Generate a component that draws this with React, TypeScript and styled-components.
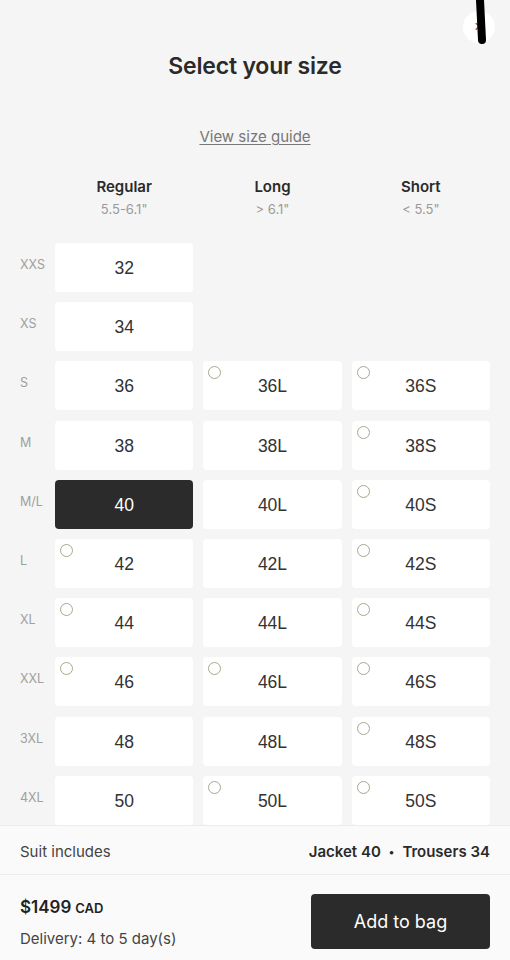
import styled, { createGlobalStyle } from "styled-components";

const GlobalStyle = createGlobalStyle`
    * { box-sizing: border-box; }
    body {
        margin: 0;
        background: #f5f5f5;
        font-family: Inter, "Liberation Sans", Arial, sans-serif;
        color: #2a2a2a;
    }
`;

const Page = styled.div`
    position: relative;
    height: 960px;
    display: flex;
    flex-direction: column;
    overflow: hidden;
    background: #f5f5f5;
`;

const ScrollArea = styled.div`
    flex: 1;
    overflow: hidden;
    padding-top: 50px;
`;

const Title = styled.h1`
    margin: 0;
    text-align: center;
    font-size: 23px;
    line-height: 32px;
    font-weight: 600;
    letter-spacing: -0.2px;
    color: #2a2a2a;
`;

const GuideLink = styled.a`
    display: block;
    width: fit-content;
    margin: 45px auto 0;
    font-size: 15px;
    line-height: 20px;
    color: #777;
    text-decoration: underline;
    text-underline-offset: 2px;
    cursor: pointer;
`;

const Grid = styled.div`
    display: grid;
    grid-template-columns: 25px repeat(3, 1fr);
    column-gap: 10px;
    row-gap: 10.2px;
    padding: 0 20px;
`;

const HeaderGrid = styled(Grid)`
    margin-top: 30px;
    margin-bottom: 25px;
`;

const ColHead = styled.div`
    display: flex;
    flex-direction: column;
    align-items: center;
`;

const ColName = styled.span`
    font-size: 15px;
    line-height: 20px;
    font-weight: 600;
    color: #2a2a2a;
`;

const ColRange = styled.span`
    margin-top: 3px;
    font-size: 13px;
    line-height: 18px;
    color: #9a9a9a;
`;

const RowLabel = styled.div`
    display: flex;
    align-items: center;
    padding-bottom: 6px;
    font-size: 12.5px;
    color: #a0a0a0;
    white-space: nowrap;
`;

const SizeCard = styled.button<{ $selected?: boolean }>`
    position: relative;
    height: 49px;
    border: none;
    border-radius: 4px;
    background: ${(p) => (p.$selected ? "#2b2b2b" : "#fff")};
    color: ${(p) => (p.$selected ? "#fff" : "#333")};
    font-family: "Liberation Sans", Arial, sans-serif;
    font-size: 17.5px;
    cursor: pointer;
    padding: 2px 0 0;
`;

const Notify = styled.span`
    position: absolute;
    top: 5px;
    left: 5px;
    width: 13px;
    height: 13px;
    border-radius: 50%;
    border: 1.2px solid #a8a890;
`;

const Empty = styled.div``;

const Footer = styled.div`
    flex: none;
    background: #fafafa;
    border-top: 1px solid #ececec;
`;

const IncludesRow = styled.div`
    display: flex;
    justify-content: space-between;
    align-items: center;
    height: 49px;
    padding: 3px 20px 0;
    border-bottom: 1px solid #ececec;
    font-size: 15px;
`;

const IncludesLabel = styled.span`
    color: #444;
`;

const IncludesValue = styled.span`
    font-weight: 600;
    color: #2a2a2a;
`;

const Dot = styled.span`
    margin: 0 8px;
    font-size: 11px;
    vertical-align: 1px;
`;

const BuyRow = styled.div`
    display: flex;
    justify-content: space-between;
    align-items: flex-start;
    height: 85px;
    padding: 19px 20px 0;
`;

const PriceBlock = styled.div`
    display: flex;
    flex-direction: column;
    gap: 11px;
    margin-top: 3px;
`;

const Price = styled.span`
    font-size: 17px;
    line-height: 20px;
    font-weight: 600;
    color: #222;
`;

const Currency = styled.span`
    font-size: 13px;
    margin-left: 4px;
`;

const Delivery = styled.span`
    font-size: 15px;
    line-height: 20px;
    color: #444;
`;

const AddButton = styled.button`
    width: 179px;
    height: 55px;
    border: none;
    border-radius: 4px;
    background: #2b2b2b;
    color: #fff;
    font-family: Inter, "Liberation Sans", Arial, sans-serif;
    font-size: 18px;
    cursor: pointer;
`;

const CloseButton = styled.button`
    position: absolute;
    top: 11px;
    right: 15px;
    width: 32px;
    height: 32px;
    border-radius: 50%;
    border: none;
    background: #fff;
    color: #555;
    font-size: 16px;
    line-height: 1;
    padding: 0;
`;

const Scribble = styled.svg`
    position: absolute;
    top: 0;
    right: 18px;
    pointer-events: none;
`;

type Cell = { label: string; notify?: boolean; selected?: boolean } | null;

const rows: { name: string; cells: Cell[] }[] = [
    { name: "XXS", cells: [{ label: "32" }, null, null] },
    { name: "XS", cells: [{ label: "34" }, null, null] },
    { name: "S", cells: [{ label: "36" }, { label: "36L", notify: true }, { label: "36S", notify: true }] },
    { name: "M", cells: [{ label: "38" }, { label: "38L" }, { label: "38S", notify: true }] },
    { name: "M/L", cells: [{ label: "40", selected: true }, { label: "40L" }, { label: "40S", notify: true }] },
    { name: "L", cells: [{ label: "42", notify: true }, { label: "42L" }, { label: "42S", notify: true }] },
    { name: "XL", cells: [{ label: "44", notify: true }, { label: "44L" }, { label: "44S", notify: true }] },
    { name: "XXL", cells: [{ label: "46", notify: true }, { label: "46L", notify: true }, { label: "46S", notify: true }] },
    { name: "3XL", cells: [{ label: "48" }, { label: "48L" }, { label: "48S", notify: true }] },
    { name: "4XL", cells: [{ label: "50" }, { label: "50L", notify: true }, { label: "50S", notify: true }] },
];

const columns = [
    { name: "Regular", range: "5.5-6.1\"" },
    { name: "Long", range: "> 6.1\"" },
    { name: "Short", range: "< 5.5\"" },
];

const App = () => {
    return (
        <Page>
            <GlobalStyle />
            <ScrollArea>
                <Title>Select your size</Title>
                <GuideLink>View size guide</GuideLink>
                <HeaderGrid>
                    <Empty />
                    {columns.map((c) => (
                        <ColHead key={c.name}>
                            <ColName>{c.name}</ColName>
                            <ColRange>{c.range}</ColRange>
                        </ColHead>
                    ))}
                </HeaderGrid>
                <Grid>
                    {rows.map((r) => (
                        <>
                            <RowLabel key={r.name}>{r.name}</RowLabel>
                            {r.cells.map((cell, i) =>
                                cell ? (
                                    <SizeCard key={r.name + i} $selected={cell.selected}>
                                        {cell.notify && <Notify />}
                                        {cell.label}
                                    </SizeCard>
                                ) : (
                                    <Empty key={r.name + i} />
                                )
                            )}
                        </>
                    ))}
                </Grid>
            </ScrollArea>
            <Footer>
                <IncludesRow>
                    <IncludesLabel>Suit includes</IncludesLabel>
                    <IncludesValue>
                        Jacket 40<Dot>•</Dot>Trousers 34
                    </IncludesValue>
                </IncludesRow>
                <BuyRow>
                    <PriceBlock>
                        <Price>
                            $1499<Currency>CAD</Currency>
                        </Price>
                        <Delivery>Delivery: 4 to 5 day(s)</Delivery>
                    </PriceBlock>
                    <AddButton>Add to bag</AddButton>
                </BuyRow>
            </Footer>
            <CloseButton>×</CloseButton>
            <Scribble width="20" height="50" viewBox="0 0 20 50">
                <path d="M8 0 L10 40" stroke="#000" strokeWidth="8" strokeLinecap="round" fill="none" />
            </Scribble>
        </Page>
    );
};

export default App;
